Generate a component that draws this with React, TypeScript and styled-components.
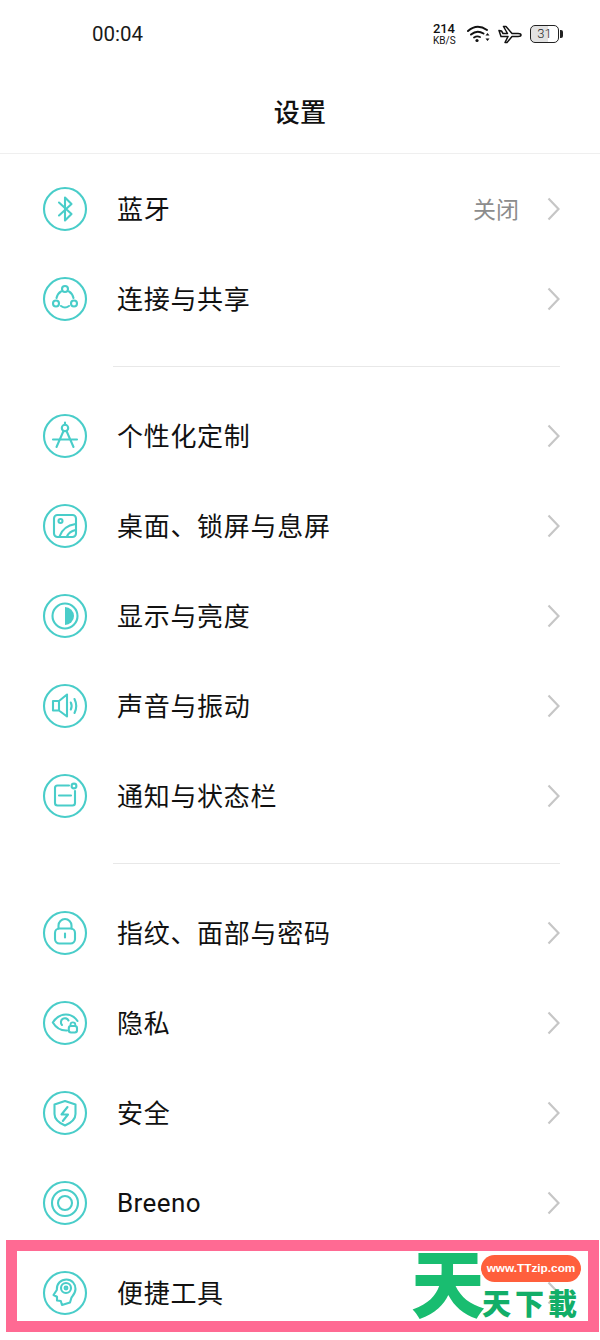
import React from "react";
import styled, { createGlobalStyle } from "styled-components";

const Global = createGlobalStyle`
  html, body { margin: 0; padding: 0; background: #fff; }
  body { font-family: "Noto Sans CJK SC", "Noto Sans", sans-serif; color: #111; }
`;

const Page = styled.div`
  position: relative;
  width: 600px;
  height: 1340px;
  overflow: hidden;
  background: #fff;
`;

const StatusBar = styled.div`
  height: 68px;
  display: flex;
  align-items: center;
  justify-content: space-between;
  padding: 0 41px 0 92px;
`;

const Time = styled.span`
  font-family: Roboto, sans-serif;
  font-size: 20.5px;
  color: #1a1a1a;
`;

const StatusIcons = styled.div`
  display: flex;
  align-items: center;
`;

const Speed = styled.div`
  display: flex;
  flex-direction: column;
  width: 24px;
  margin-right: 10px;
  font-family: Roboto, sans-serif;
  color: #111;
`;

const SpeedValue = styled.span`
  font-size: 13px;
  font-weight: 500;
  line-height: 13px;
  letter-spacing: -0.1px;
`;

const SpeedUnit = styled.span`
  font-size: 10px;
  line-height: 11px;
`;

const WifiSvg = styled.svg`
  margin-right: 7px;
  fill: none;
  stroke: #111;
  stroke-linecap: round;
`;

const PlaneSvg = styled.svg`
  fill: none;
  stroke: #111;
  stroke-width: 1.5;
  stroke-linejoin: round;
`;

const Battery = styled.div`
  position: relative;
  box-sizing: border-box;
  width: 29px;
  height: 18px;
  margin-left: 8px;
  border: 1.6px solid #222;
  border-radius: 5px;
  background: linear-gradient(to right, #e2e2e2 62%, #fff 62%);
  font-family: Roboto, sans-serif;
  font-weight: 300;
  font-size: 13px;
  line-height: 15px;
  text-align: center;
  color: #222;
  &::after {
    content: "";
    position: absolute;
    right: -4.6px;
    top: 3.5px;
    width: 2.5px;
    height: 8px;
    background: #222;
    border-radius: 0 2px 2px 0;
  }
`;

const Header = styled.header`
  height: 85px;
  display: flex;
  align-items: center;
  justify-content: center;
  border-bottom: 1px solid #efefef;
`;

const Title = styled.h1`
  margin: 0;
  font-size: 26px;
  font-weight: 500;
  line-height: 1;
  letter-spacing: 0.3px;
  color: #111;
`;

const Group = styled.section<{ $top: number }>`
  margin-top: ${(p) => p.$top}px;
`;

const Divider = styled.hr`
  height: 1px;
  margin: 22px 40px 24px 113px;
  border: 0;
  background: #e8e8e8;
`;

const Row = styled.div`
  height: 90px;
  display: flex;
  align-items: center;
  padding: 0 40px 0 42px;
`;

const Badge = styled.svg`
  flex: none;
  width: 46px;
  height: 46px;
  margin-right: 29px;
  fill: none;
  stroke: #49cdc9;
  stroke-width: 2.1;
  stroke-linecap: round;
  stroke-linejoin: round;
`;

const Label = styled.span<{ $latin?: boolean }>`
  flex: 1;
  padding-bottom: ${(p) => (p.$latin ? 0 : 2)}px;
  font-family: ${(p) => (p.$latin ? "Roboto, sans-serif" : '"Noto Sans CJK SC", sans-serif')};
  font-size: 26px;
  letter-spacing: ${(p) => (p.$latin ? "0.4px" : "0.7px")};
  line-height: 1;
  color: #111;
`;

const Value = styled.span`
  padding-bottom: 2px;
  font-size: 23px;
  line-height: 1;
  color: #8c8c8c;
  margin-right: 28px;
`;

const Chevron = styled.svg`
  flex: none;
  width: 13px;
  height: 24px;
  fill: none;
  stroke: #c6c6c6;
  stroke-width: 2.2;
`;

const Frame = styled.div`
  position: absolute;
  left: 6px;
  top: 1240px;
  width: 571px;
  height: 70px;
  border: 11px solid #ff6a93;
  pointer-events: none;
`;

const Watermark = styled.div`
  position: absolute;
  left: 410px;
  top: 1248px;
  width: 174px;
  height: 74px;
`;

const BigGlyph = styled.span`
  position: absolute;
  left: 1px;
  top: -12px;
  font-size: 74px;
  font-weight: 900;
  line-height: 1.2;
  color: #19bd70;
`;

const Pill = styled.span`
  position: absolute;
  left: 71px;
  top: 7px;
  width: 100px;
  height: 27px;
  border-radius: 14px;
  background: #ff5f3c;
  color: #fff;
  font-family: "Liberation Sans", sans-serif;
  font-weight: 700;
  font-size: 11.8px;
  line-height: 27px;
  text-align: center;
`;

const SmallGlyphs = styled.span`
  position: absolute;
  left: 72px;
  top: 35px;
  font-size: 29px;
  font-weight: 900;
  line-height: 38px;
  letter-spacing: 4px;
  white-space: nowrap;
  color: #12ae68;
`;

const Ring = () => <circle cx="23" cy="23" r="21" />;

const icons: Record<string, React.ReactNode> = {
  bluetooth: <path d="M17 16.5 29.5 28 23 34.5V11.5L29.5 18 17 29.5" />,
  share: (
    <>
      <circle cx="23" cy="13" r="3" />
      <circle cx="14" cy="27.5" r="3" />
      <circle cx="32" cy="27.5" r="3" />
      <path d="M14.5 22Q15.5 17.5 19 15.5M31.5 22Q30.5 17.5 27 15.5M19 30Q23 33 27 30" />
    </>
  ),
  compass: (
    <>
      <circle cx="23" cy="15" r="3.2" />
      <path d="M23 9.5V11.8M21.5 18 14.5 34M24.5 18 31.5 34M11 26.5H35" />
    </>
  ),
  wallpaper: (
    <>
      <rect x="12" y="12" width="22" height="22" rx="3.5" />
      <circle cx="18.5" cy="18" r="2" />
      <path d="M17.5 33.5Q21 23 33.5 21M25 33.5Q27 28.5 33.5 27" />
    </>
  ),
  contrast: (
    <>
      <circle cx="23" cy="23" r="12.5" />
      <path d="M23 14A9 9 0 0 1 23 32Z" fill="#49cdc9" stroke="none" />
    </>
  ),
  sound: (
    <>
      <path d="M11 18H17L25 11.5V33.5L17 27.5H11ZM17 18V27.5" />
      <path d="M28.8 19.5Q30.5 23 28.8 26.5M32.5 16Q36 23 32.5 30" />
    </>
  ),
  notice: (
    <>
      <path d="M27 12.5H15.5A2.5 2.5 0 0 0 13 15V30A2.5 2.5 0 0 0 15.5 32.5H30.5A2.5 2.5 0 0 0 33 30V18M17 22.5H29" />
      <circle cx="32" cy="13" r="2.4" />
    </>
  ),
  lock: (
    <>
      <rect x="13" y="18.5" width="20" height="15" rx="4.5" />
      <path d="M16.5 18.5V15.5A6.5 6.5 0 0 1 29.5 15.5V18.5M23 23.5V27.5" />
    </>
  ),
  privacy: (
    <>
      <path d="M25 30.5Q16 31 10.8 22.5Q16 14.5 24 14.5Q31 14.5 35.5 21" />
      <path d="M26.5 20.5A4 4 0 1 0 20 25" />
      <path d="M28.5 26V24.8A2.4 2.4 0 0 1 33.3 24.8V26" strokeWidth="1.8" />
      <rect x="26.8" y="26" width="8.2" height="6.5" rx="2.2" />
    </>
  ),
  shield: (
    <>
      <path d="M23 11 33.5 14.5V24Q33.5 31 23 35.5 12.5 31 12.5 24V14.5Z" />
      <path d="M25.5 17 19.5 24.5H26L20.8 31" />
    </>
  ),
  breeno: (
    <>
      <circle cx="23" cy="23" r="13" />
      <circle cx="23" cy="23" r="7" />
    </>
  ),
  tools: (
    <>
      <path d="M20 35 18.8 31 15 30.5V26.8L11.5 25 14.8 20C14.5 13.5 19 9.5 24.5 9.5 30 9.5 33.5 14 33.5 19 33.5 23 31 25.5 29.5 27.5L28 32.5Z" />
      <circle cx="24" cy="18" r="5" />
      <circle cx="24" cy="18" r="1.4" />
    </>
  ),
};

type Item = { icon: string; label: string; value?: string; latin?: boolean };

const groups: Item[][] = [
  [
    { icon: "bluetooth", label: "蓝牙", value: "关闭" },
    { icon: "share", label: "连接与共享" },
  ],
  [
    { icon: "compass", label: "个性化定制" },
    { icon: "wallpaper", label: "桌面、锁屏与息屏" },
    { icon: "contrast", label: "显示与亮度" },
    { icon: "sound", label: "声音与振动" },
    { icon: "notice", label: "通知与状态栏" },
  ],
  [
    { icon: "lock", label: "指纹、面部与密码" },
    { icon: "privacy", label: "隐私" },
    { icon: "shield", label: "安全" },
    { icon: "breeno", label: "Breeno", latin: true },
    { icon: "tools", label: "便捷工具" },
  ],
];

const WifiIcon = () => (
  <WifiSvg width="24" height="18" viewBox="0 0 24 18">
    <path d="M1 6Q10-2 20 5" strokeWidth="2" />
    <path d="M4 9.5Q10 4.5 16.5 8.5" strokeWidth="2" />
    <path d="M7 12.5Q10 10.5 13 12" strokeWidth="1.8" />
    <circle cx="10" cy="15.5" r="1.6" fill="#111" stroke="none" />
    <path d="M20.5 8 18.5 10.5H22.5ZM20.5 16 18.5 13.5H22.5Z" fill="#111" stroke="none" />
  </WifiSvg>
);

const PlaneIcon = () => (
  <PlaneSvg width="24" height="19" viewBox="0 0 24 19">
    <path d="M1 5.5 3.5 6 5 8.5H9.5L5.5 1.5H8L14 8.5H20Q23 8.5 23 10T20 11.5H14L9 17.5H7L10 11.5H3Z" />
  </PlaneSvg>
);

export default function App() {
  return (
    <Page>
      <Global />
      <StatusBar>
        <Time>00:04</Time>
        <StatusIcons>
          <Speed>
            <SpeedValue>214</SpeedValue>
            <SpeedUnit>KB/S</SpeedUnit>
          </Speed>
          <WifiIcon />
          <PlaneIcon />
          <Battery>31</Battery>
        </StatusIcons>
      </StatusBar>
      <Header>
        <Title>设置</Title>
      </Header>
      {groups.map((group, i) => (
        <React.Fragment key={i}>
          {i > 0 ? <Divider /> : null}
          <Group $top={i === 0 ? 10 : 0}>
            {group.map((item) => (
              <Row key={item.label}>
                <Badge viewBox="0 0 46 46">
                  <Ring />
                  {icons[item.icon]}
                </Badge>
                <Label $latin={item.latin}>{item.label}</Label>
                {item.value ? <Value>{item.value}</Value> : null}
                <Chevron viewBox="0 0 13 24">
                  <path d="M1.5 1.5 11.5 12 1.5 22.5" />
                </Chevron>
              </Row>
            ))}
          </Group>
        </React.Fragment>
      ))}
      <Frame />
      <Watermark>
        <BigGlyph>天</BigGlyph>
        <SmallGlyphs>天下載</SmallGlyphs>
        <Pill>www.TTzip.com</Pill>
      </Watermark>
    </Page>
  );
}
